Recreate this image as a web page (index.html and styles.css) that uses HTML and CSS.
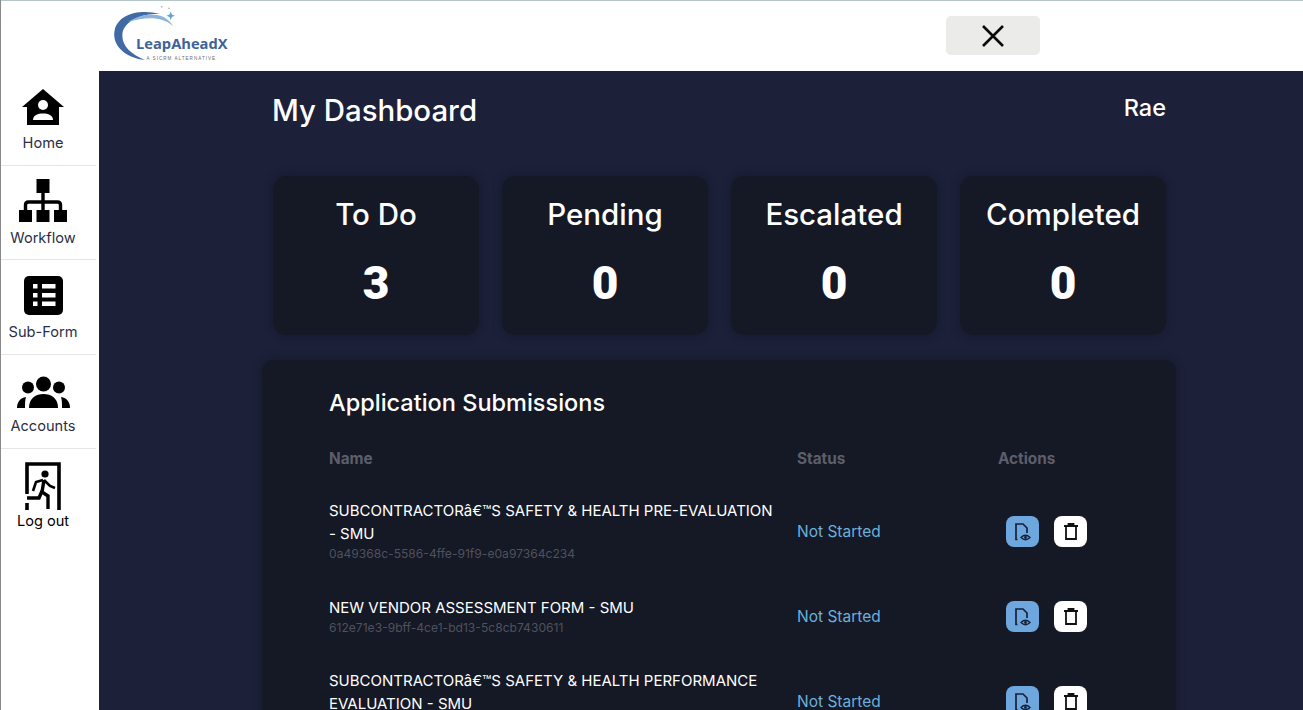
FILE: index.html
```html
<!DOCTYPE html>
<html lang="en">
<head>
    <meta charset="UTF-8">
    <meta name="viewport" content="width=device-width, initial-scale=1.0">
    <title>LeapAheadX - My Dashboard</title>
    <link rel="stylesheet" href="styles.css">
</head>
<body>
    <header class="topbar">
        <svg class="logo" width="120" height="62" viewBox="0 0 120 62">
            <path d="M47 10 C28 5 5 9 1.500 27 C-1 41 12 54 32 56 C17 50 8 41 9.500 29 C12 16 30 9 47 10 Z" fill="#3f6aa3"/>
            <path d="M15 18 C32 7 52 8 60 22 C50 13 34 12 15 18 Z" fill="#8db4d6"/>
            <path d="M57.700 7.500 l1.200 3 3 1.200 -3 1.200 -1.200 3 -1.200 -3 -3 -1.200 3 -1.200 Z" fill="#62a6cf"/>
            <circle cx="48.700" cy="2.700" r="1" fill="#b9c4cc"/>
            <circle cx="56" cy="4.300" r="0.800" fill="#9aa7b0"/>
            <text class="logo-name" x="23" y="45">LeapAheadX</text>
            <text class="logo-tag" x="33.500" y="55.500">A SICRM ALTERNATIVE</text>
        </svg>
        <button class="close-btn" type="button" aria-label="Close">
            <svg width="24" height="24" viewBox="0 0 24 24"><path d="M2 2 L22 22 M22 2 L2 22" fill="none" stroke="#0b0b0b" stroke-width="2.600"/></svg>
        </button>
    </header>

    <div class="layout">
        <nav class="sidebar">
            <a class="nav-item" href="#">
                <svg class="nav-icon" width="44" height="36" viewBox="0 0 44 36">
                    <path d="M22 0 L43 18 L38 18 L38 36 L6 36 L6 18 L1 18 Z" fill="#000"/>
                    <circle cx="22" cy="16" r="5" fill="#fff"/>
                    <path d="M12 31 C12 26 17 24.500 22 24.500 C27 24.500 32 26 32 31 Z" fill="#fff"/>
                </svg>
                <span>Home</span>
            </a>
            <a class="nav-item" href="#">
                <svg class="nav-icon" width="48" height="43" viewBox="0 0 48 43">
                    <rect x="17.500" y="0" width="13" height="14" fill="#000"/>
                    <path d="M24 13 V31 M6.500 31 V26 Q6.500 23 9.500 23 H38.500 Q41.500 23 41.500 26 V31" fill="none" stroke="#000" stroke-width="3.400"/>
                    <rect x="0" y="31" width="13" height="12" fill="#000"/>
                    <rect x="17.500" y="31" width="13" height="12" fill="#000"/>
                    <rect x="35" y="31" width="13" height="12" fill="#000"/>
                </svg>
                <span>Workflow</span>
            </a>
            <a class="nav-item" href="#">
                <svg class="nav-icon" width="39" height="39" viewBox="0 0 39 39">
                    <rect width="39" height="39" rx="5" fill="#000"/>
                    <path d="M9 8 h4.500 v4.500 h-4.500 Z M9 17 h4.500 v4.500 h-4.500 Z M9 25.500 h4.500 v4.500 h-4.500 Z M18 8 h13.500 v4.500 h-13.500 Z M18 17 h13.500 v4.500 h-13.500 Z M18 25.500 h13.500 v4.500 h-13.500 Z" fill="#fff"/>
                </svg>
                <span>Sub-Form</span>
            </a>
            <a class="nav-item" href="#">
                <svg class="nav-icon" width="53" height="33" viewBox="0 0 53 33">
                    <circle cx="26.500" cy="8" r="7.500" fill="#000"/>
                    <circle cx="11" cy="11.500" r="6" fill="#000"/>
                    <circle cx="42" cy="11.500" r="6" fill="#000"/>
                    <path d="M12 32 C12 22 19 18 26.500 18 C34 18 41 22 41 32 Z" fill="#000"/>
                    <path d="M0 32 C0 26 3 22 9 21 C8 24 8 28 8 32 Z M53 32 C53 26 50 22 44 21 C45 24 45 28 45 32 Z" fill="#000"/>
                </svg>
                <span>Accounts</span>
            </a>
            <a class="nav-item nav-item-last" href="#">
                <svg class="nav-icon" width="38" height="48" viewBox="0 0 38 48">
                    <path d="M3 32 V2 H35 V48" fill="none" stroke="#000" stroke-width="3.600"/>
                    <path d="M3 41 V48" fill="none" stroke="#000" stroke-width="3.600"/>
                    <circle cx="21" cy="12" r="3.600" fill="#000"/>
                    <path d="M20 18 L26 24 L31 26 M19 18 L12 20 L9 29" fill="none" stroke="#000" stroke-width="2.600"/>
                    <path d="M20 18 L18 30 L24 34 L24 47 M18 29 L15 36 L3 36" fill="none" stroke="#000" stroke-width="3.400"/>
                </svg>
                <span>Log out</span>
            </a>
        </nav>

        <main class="main">
            <div class="page-head">
                <h1>My Dashboard</h1>
                <div class="user-name">Rae</div>
            </div>

            <section class="stats">
                <div class="stat-card">
                    <div class="stat-label">To Do</div>
                    <div class="stat-value">3</div>
                </div>
                <div class="stat-card">
                    <div class="stat-label">Pending</div>
                    <div class="stat-value">0</div>
                </div>
                <div class="stat-card">
                    <div class="stat-label">Escalated</div>
                    <div class="stat-value">0</div>
                </div>
                <div class="stat-card">
                    <div class="stat-label">Completed</div>
                    <div class="stat-value">0</div>
                </div>
            </section>

            <section class="panel">
                <h2>Application Submissions</h2>
                <div class="table-row table-head">
                    <div>Name</div>
                    <div>Status</div>
                    <div>Actions</div>
                </div>

                <div class="table-row">
                    <div>
                        <div class="form-name">SUBCONTRACTORâ€™S SAFETY &amp; HEALTH PRE-EVALUATION - SMU</div>
                        <div class="form-id">0a49368c-5586-4ffe-91f9-e0a97364c234</div>
                    </div>
                    <div class="status">Not Started</div>
                    <div class="actions">
                        <button class="icon-btn icon-btn-view" type="button" aria-label="View">
                            <svg width="20" height="20" viewBox="0 0 20 20"><path d="M4.500 17.500 H3 V2 H10 L14 6 V11" fill="none" stroke="#14213a" stroke-width="1.700"/><path d="M8 15.500 Q12.500 11 17 15.500 Q12.500 20 8 15.500 Z" fill="none" stroke="#14213a" stroke-width="1.300"/><circle cx="12.500" cy="15.500" r="1.400" fill="#14213a"/></svg>
                        </button>
                        <button class="icon-btn icon-btn-delete" type="button" aria-label="Delete">
                            <svg width="14" height="17" viewBox="0 0 14 17"><path d="M0 3 H14 M4.500 2.500 V1 H9.500 V2.500 M2 3.500 V16 H12 V3.500" fill="none" stroke="#111" stroke-width="1.800"/></svg>
                        </button>
                    </div>
                </div>

                <div class="table-row">
                    <div>
                        <div class="form-name">NEW VENDOR ASSESSMENT FORM - SMU</div>
                        <div class="form-id">612e71e3-9bff-4ce1-bd13-5c8cb7430611</div>
                    </div>
                    <div class="status">Not Started</div>
                    <div class="actions">
                        <button class="icon-btn icon-btn-view" type="button" aria-label="View">
                            <svg width="20" height="20" viewBox="0 0 20 20"><path d="M4.500 17.500 H3 V2 H10 L14 6 V11" fill="none" stroke="#14213a" stroke-width="1.700"/><path d="M8 15.500 Q12.500 11 17 15.500 Q12.500 20 8 15.500 Z" fill="none" stroke="#14213a" stroke-width="1.300"/><circle cx="12.500" cy="15.500" r="1.400" fill="#14213a"/></svg>
                        </button>
                        <button class="icon-btn icon-btn-delete" type="button" aria-label="Delete">
                            <svg width="14" height="17" viewBox="0 0 14 17"><path d="M0 3 H14 M4.500 2.500 V1 H9.500 V2.500 M2 3.500 V16 H12 V3.500" fill="none" stroke="#111" stroke-width="1.800"/></svg>
                        </button>
                    </div>
                </div>

                <div class="table-row">
                    <div>
                        <div class="form-name">SUBCONTRACTORâ€™S SAFETY &amp; HEALTH PERFORMANCE EVALUATION - SMU</div>
                        <div class="form-id">&nbsp;</div>
                    </div>
                    <div class="status">Not Started</div>
                    <div class="actions">
                        <button class="icon-btn icon-btn-view" type="button" aria-label="View">
                            <svg width="20" height="20" viewBox="0 0 20 20"><path d="M4.500 17.500 H3 V2 H10 L14 6 V11" fill="none" stroke="#14213a" stroke-width="1.700"/><path d="M8 15.500 Q12.500 11 17 15.500 Q12.500 20 8 15.500 Z" fill="none" stroke="#14213a" stroke-width="1.300"/><circle cx="12.500" cy="15.500" r="1.400" fill="#14213a"/></svg>
                        </button>
                        <button class="icon-btn icon-btn-delete" type="button" aria-label="Delete">
                            <svg width="14" height="17" viewBox="0 0 14 17"><path d="M0 3 H14 M4.500 2.500 V1 H9.500 V2.500 M2 3.500 V16 H12 V3.500" fill="none" stroke="#111" stroke-width="1.800"/></svg>
                        </button>
                    </div>
                </div>
            </section>
        </main>
    </div>
</body>
</html>
```

FILE: styles.css
```css
* {
    box-sizing: border-box;
}
html, body {
    height: 100%;
}
body {
    margin: 0;
    overflow: hidden;
    font-family: Inter, "Liberation Sans", sans-serif;
    background-color: #ffffff;
    display: flex;
    flex-direction: column;
    border-left: 1px solid #8a8a8a;
}
h1, h2 {
    margin: 0;
    font-weight: 500;
}

/* top bar */
.topbar {
    flex: none;
    height: 71px;
    padding-left: 112px;
    background-color: #ffffff;
    border-top: 1px solid #b4c6c8;
    display: flex;
    align-items: flex-start;
}
.logo {
    margin-top: 3px;
}
.logo-name {
    font-family: "Open Sans", "Liberation Sans", sans-serif;
    font-size: 14.700px;
    font-weight: 700;
    fill: #3f6398;
}
.logo-tag {
    font-family: "Liberation Sans", sans-serif;
    font-size: 4.600px;
    letter-spacing: 1px;
    fill: #666c78;
}
.close-btn {
    width: 94px;
    height: 39px;
    margin: 15px 0 0 713px;
    background-color: #ebebe9;
    border: 0;
    border-radius: 5px;
    display: flex;
    align-items: center;
    justify-content: center;
}

.layout {
    flex: 1;
    min-height: 0;
    display: flex;
}

/* sidebar */
.sidebar {
    flex: none;
    width: 98px;
}
.nav-item {
    height: 94.500px;
    margin-right: 3px;
    border-bottom: 1px solid #e6e6e8;
    color: #2b2e45;
    font-size: 14.600px;
    text-decoration: none;
    display: flex;
    flex-direction: column;
    align-items: center;
    justify-content: flex-end;
    padding: 0 11px 13px 0;
}
.nav-item span {
    margin-top: 9px;
    line-height: 17px;
}
.nav-item:first-child span {
    margin-top: 10px;
}
.nav-item:nth-child(2) {
    padding-bottom: 12px;
}
.nav-item:nth-child(2) span {
    margin-top: 8px;
}
.nav-item-last {
    border-bottom: 0;
    color: #000000;
    justify-content: flex-start;
    padding: 13px 11px 0 0;
}
.nav-item-last span {
    margin-top: 3px;
}
.nav-icon {
    display: block;
    flex: none;
}

/* main area */
.main {
    flex: 1;
    min-width: 0;
    padding: 0 127px 0 163px;
    background-color: #1c2039;
    color: #ffffff;
}
.page-head {
    height: 105px;
    padding: 23px 10px 0 10px;
    display: flex;
    justify-content: space-between;
    align-items: flex-start;
}
.page-head h1 {
    font-size: 29.400px;
    line-height: 34px;
}
.user-name {
    font-size: 23.500px;
    font-weight: 500;
    line-height: 28px;
}
.stats {
    margin: 0 10px 0 11px;
    display: grid;
    grid-template-columns: repeat(4, 1fr);
    column-gap: 23px;
}
.stat-card {
    height: 159px;
    padding-top: 20px;
    background-color: #151825;
    border-radius: 14px;
    box-shadow: 0 0 8px rgba(18, 20, 34, 0.6);
    text-align: center;
}
.stat-label {
    font-size: 29.500px;
    font-weight: 500;
    line-height: 36px;
}
.stat-value {
    margin-top: 20px;
    font-family: Roboto, "Liberation Sans", sans-serif;
    font-size: 46px;
    font-weight: 900;
    line-height: 62px;
}

/* submissions table */
.panel {
    height: 400px;
    margin-top: 25px;
    padding: 28px 0 0 67px;
    background-color: #151825;
    border-radius: 12px;
    box-shadow: 0 0 8px rgba(18, 20, 34, 0.6);
}
.panel h2 {
    font-size: 23.500px;
    line-height: 30px;
}
.table-row {
    min-height: 85px;
    display: grid;
    grid-template-columns: 468px 201px 1fr;
    align-items: center;
}
.table-head {
    min-height: 0;
    height: 17px;
    margin: 32px 0 21px;
    color: #5c5f6b;
    font-size: 15.300px;
    font-weight: 700;
    line-height: 17px;
}
.form-name {
    max-width: 450px;
    font-size: 15px;
    line-height: 23px;
    color: #ffffff;
}
.form-id {
    font-size: 12.100px;
    line-height: 17px;
    color: #4f525e;
}
.status {
    padding-top: 2px;
    font-size: 15.500px;
    color: #6bb0dc;
}
.actions {
    padding: 2px 0 0 8px;
    display: flex;
    gap: 15px;
}
.icon-btn {
    width: 33px;
    height: 31px;
    padding: 0;
    border: 0;
    border-radius: 8px;
    display: flex;
    align-items: center;
    justify-content: center;
}
.icon-btn-view {
    background-color: #6ea7de;
}
.icon-btn-delete {
    background-color: #ffffff;
}
```
